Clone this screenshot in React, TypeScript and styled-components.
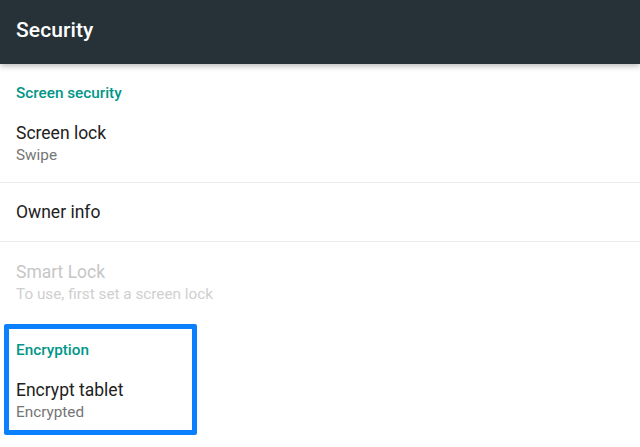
import React from "react";
import styled, { createGlobalStyle } from "styled-components";

const Global = createGlobalStyle`
  html, body { margin: 0; padding: 0; background: #ffffff; }
  body { font-family: Roboto, "Noto Sans", "Liberation Sans", sans-serif; overflow: hidden; }
  * { box-sizing: border-box; }
`;

const Page = styled.div`
  width: 640px;
  height: 447px;
  background: #ffffff;
  display: flex;
  flex-direction: column;
  overflow: hidden;
`;

const Toolbar = styled.header`
  height: 64px;
  flex: 0 0 64px;
  background: #263238;
  display: flex;
  align-items: center;
  padding: 0 16px 4px;
  box-shadow: 0 2px 6px rgba(0, 0, 0, 0.28);
  position: relative;
  z-index: 1;
`;

const Title = styled.h1`
  margin: 0;
  font-size: 21px;
  font-weight: 500;
  color: #ffffff;
  letter-spacing: 0.1px;
`;

const Section = styled.section`
  position: relative;
  display: flex;
  flex-direction: column;
`;

const Highlight = styled.div`
  position: absolute;
  left: 4px;
  top: 2px;
  width: 193px;
  height: 111px;
  border: 5px solid #0a80ff;
  border-radius: 2px;
  pointer-events: none;
`;

const Category = styled.div<{ $first?: boolean }>`
  height: ${(p) => (p.$first ? "39px" : "38px")};
  padding: ${(p) => (p.$first ? "20px" : "19px")} 16px 0;
  font-size: 15.3px;
  line-height: 18px;
  font-weight: 500;
  color: #009688;
`;

const Item = styled.div<{ $single?: boolean; $divider?: boolean }>`
  display: flex;
  flex-direction: column;
  justify-content: ${(p) => (p.$single ? "center" : "flex-start")};
  height: ${(p) => (p.$single ? "59px" : "80px")};
  padding: ${(p) => (p.$single ? "0 16px" : "19px 16px 0")};
  border-bottom: ${(p) => (p.$divider ? "1px solid #ececec" : "none")};
`;

const ItemTitle = styled.div<{ $disabled?: boolean }>`
  font-size: 17.5px;
  line-height: 23px;
  color: ${(p) => (p.$disabled ? "#c6c6c6" : "#212121")};
`;

const ItemSummary = styled.div<{ $disabled?: boolean }>`
  font-size: 15.3px;
  line-height: 20px;
  color: ${(p) => (p.$disabled ? "#cfcfcf" : "#757575")};
`;

export default function App() {
  return (
    <>
      <Global />
      <Page>
        <Toolbar>
          <Title>Security</Title>
        </Toolbar>
        <Section>
          <Category $first>Screen security</Category>
          <Item $divider>
            <ItemTitle>Screen lock</ItemTitle>
            <ItemSummary>Swipe</ItemSummary>
          </Item>
          <Item $single $divider>
            <ItemTitle>Owner info</ItemTitle>
          </Item>
          <Item>
            <ItemTitle $disabled>Smart Lock</ItemTitle>
            <ItemSummary $disabled>To use, first set a screen lock</ItemSummary>
          </Item>
        </Section>
        <Section>
          <Highlight />
          <Category>Encryption</Category>
          <Item>
            <ItemTitle>Encrypt tablet</ItemTitle>
            <ItemSummary>Encrypted</ItemSummary>
          </Item>
        </Section>
      </Page>
    </>
  );
}
